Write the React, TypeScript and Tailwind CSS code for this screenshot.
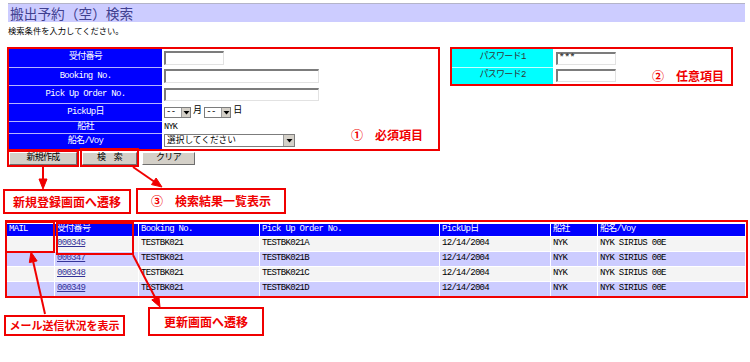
import React from 'react';

const mono = "font-['Liberation_Mono','Noto_Sans_CJK_JP',monospace] text-[9px] tracking-[-0.7px]";
const note = "font-['Noto_Sans_CJK_JP',sans-serif] font-bold text-[12px] text-[#f00000] whitespace-nowrap";

interface Row {
  no: string;
  booking: string;
  order: string;
  date: string;
  carrier: string;
  vessel: string;
}

const rows: Row[] = [
  { no: '000345', booking: 'TESTBK021', order: 'TESTBK021A', date: '12/14/2004', carrier: 'NYK', vessel: 'NYK SIRIUS 00E' },
  { no: '000347', booking: 'TESTBK021', order: 'TESTBK021B', date: '12/14/2004', carrier: 'NYK', vessel: 'NYK SIRIUS 00E' },
  { no: '000348', booking: 'TESTBK021', order: 'TESTBK021C', date: '12/14/2004', carrier: 'NYK', vessel: 'NYK SIRIUS 00E' },
  { no: '000349', booking: 'TESTBK021', order: 'TESTBK021D', date: '12/14/2004', carrier: 'NYK', vessel: 'NYK SIRIUS 00E' },
];

function TextBox({ className, value }: { className: string; value?: string }) {
  return (
    <div
      className={`flex items-center bg-white border border-t-2 border-l-2 border-t-[#7c7c7c] border-l-[#7c7c7c] border-r-[#e2e2e2] border-b-[#e2e2e2] pl-[1px] ${className}`}
    >
      {value && <span className="leading-none text-[9px] font-bold tracking-[0px] text-[#444]">{value}</span>}
    </div>
  );
}

function Arrow() {
  return (
    <svg width="7" height="5" viewBox="0 0 7 5">
      <polygon points="0.5,1 6.5,1 3.5,4.5" fill="#000" />
    </svg>
  );
}

function SmallSelect() {
  return (
    <div className="flex h-[11px] w-[27px] items-stretch border border-[#7c7c7c] bg-white">
      <span className="flex flex-1 items-center pl-[1px] leading-none">--</span>
      <span className="flex w-[9px] items-center justify-center bg-[#d4d0c8] border-l border-[#9a9a9a]">
        <Arrow />
      </span>
    </div>
  );
}

function Button({ label, className }: { label: string; className: string }) {
  return (
    <div
      className={`flex h-[13px] items-center justify-center bg-[#d4d0c8] border border-t-white border-l-white border-r-[#6e6e6e] border-b-[#6e6e6e] leading-none ${className}`}
    >
      {label}
    </div>
  );
}

export default function App() {
  return (
    <div className="relative h-[362px] w-[750px] overflow-hidden bg-white pt-[3px] text-black">
      {/* Title */}
      <div className="ml-[8px] h-[19px] w-[737px] border-t border-[#b4b4c8] bg-[#ccccff] pl-[2px] font-['Noto_Sans_CJK_JP',sans-serif] text-[13.7px] leading-[18px] text-[#404090]">
        搬出予約（空）検索
      </div>
      <div className="ml-[8px] mt-[3px] font-['Noto_Sans_CJK_JP',sans-serif] text-[8.3px] leading-[10px]">
        検索条件を入力してください。
      </div>

      {/* Search form */}
      <div className={`ml-[7px] mt-[12px] flex items-start ${mono}`}>
        <div className="relative h-[104px] w-[433px] border-2 border-[#f00000]">
          <div className="flex h-[18px]">
            <div className="flex w-[153px] items-center justify-center bg-[#0000ff] text-white">受付番号</div>
            <div className="flex items-center pl-[2px]">
              <TextBox className="h-[14px] w-[60px]" />
            </div>
          </div>
          <div className="flex h-[18px]">
            <div className="flex w-[153px] items-center justify-center border-t border-[#b4b4ff] bg-[#0000ff] text-white">Booking No.</div>
            <div className="flex items-center pl-[2px]">
              <TextBox className="h-[14px] w-[155px]" />
            </div>
          </div>
          <div className="flex h-[18px]">
            <div className="flex w-[153px] items-center justify-center border-t border-[#b4b4ff] bg-[#0000ff] text-white">Pick Up Order No.</div>
            <div className="flex items-center pl-[2px]">
              <TextBox className="h-[13px] w-[155px]" />
            </div>
          </div>
          <div className="flex h-[18px]">
            <div className="flex w-[153px] items-center justify-center border-t border-[#b4b4ff] bg-[#0000ff] text-white">PickUp日</div>
            <div className="flex items-center gap-[2px] pl-[2px]">
              <SmallSelect />
              <span className="mr-[1px]">月</span>
              <SmallSelect />
              <span>日</span>
            </div>
          </div>
          <div className="flex h-[12px]">
            <div className="flex w-[153px] items-center justify-center border-t border-[#b4b4ff] bg-[#0000ff] text-white">船社</div>
            <div className="flex items-center pl-[2px] text-[8.5px]">NYK</div>
          </div>
          <div className="flex h-[16px]">
            <div className="flex w-[153px] items-center justify-center border-t border-[#b4b4ff] bg-[#0000ff] text-white">船名/Voy</div>
            <div className="flex items-start pl-[2px] pt-[1px]">
              <div className="flex h-[13px] w-[131px] items-stretch border border-[#7c7c7c] bg-white">
                <span className="flex flex-1 items-center pl-[2px] font-['Noto_Sans_CJK_JP',sans-serif] text-[8.7px] tracking-normal leading-none">
                  選択してください
                </span>
                <span className="flex w-[11px] items-center justify-center bg-[#d4d0c8] border-l border-[#9a9a9a]">
                  <Arrow />
                </span>
              </div>
            </div>
          </div>
          <div className={`absolute left-[342px] top-[80px] leading-none tracking-normal ${note}`}>①　必須項目</div>
        </div>

        <div className="ml-[10px] h-[39px] w-[283px] border-2 border-[#f00000]">
          <div className="flex h-[18px]">
            <div className="flex w-[101px] items-center justify-center bg-[#00ffff] text-[#333]">パスワード1</div>
            <div className="flex items-center pl-[3px]">
              <TextBox className="h-[13px] w-[60px]" value="***" />
            </div>
          </div>
          <div className="flex h-[17px]">
            <div className="flex w-[101px] items-center justify-center border-t border-[#c4ffff] bg-[#00ffff] text-[#333]">パスワード2</div>
            <div className="flex items-center pl-[3px]">
              <TextBox className="h-[13px] w-[60px]" />
              <span className={`ml-[36px] leading-none tracking-normal ${note}`}>②　任意項目</span>
            </div>
          </div>
        </div>
      </div>

      {/* Buttons */}
      <div className={`ml-[9px] mt-[1px] flex gap-[5px] ${mono}`}>
        <Button label="新規作成" className="w-[68px]" />
        <Button label="検　索" className="w-[55px]" />
        <Button label="クリア" className="w-[53px]" />
      </div>

      {/* Notes for buttons */}
      <div className="ml-[3px] mt-[23px] flex items-start gap-[5px]">
        <div className={`mt-[1px] flex h-[25px] w-[128px] items-center justify-center border-2 border-[#f00000] ${note}`}>
          新規登録画面へ遷移
        </div>
        <div className={`flex h-[26px] w-[150px] items-center justify-center border-2 border-[#f00000] ${note}`}>
          ③　検索結果一覧表示
        </div>
      </div>

      {/* Result list */}
      <div className={`ml-[5px] mt-[6px] h-[78px] w-[743px] border-2 border-[#f00000] pt-[2px] ${mono}`}>
        <div className="grid grid-cols-[47px_83px_120px_179px_110px_46px_147px] gap-[1px] bg-white">
          {['MAIL', '受付番号', 'Booking No.', 'Pick Up Order No.', 'PickUp日', '船社', '船名/Voy'].map((h) => (
            <div key={h} className="flex h-[12px] items-center bg-[#0000ff] pl-[2px] text-white">
              {h}
            </div>
          ))}
          {rows.map((r, i) => {
            const bg = i % 2 === 0 ? 'bg-[#f4f4f4]' : 'bg-[#ccccff]';
            return (
              <React.Fragment key={r.no}>
                <div className={`h-[14px] ${bg}`} />
                <div className={`flex h-[14px] items-center pl-[2px] ${bg}`}>
                  <span className="text-[#333399] underline">{r.no}</span>
                </div>
                <div className={`flex h-[14px] items-center pl-[2px] ${bg}`}>{r.booking}</div>
                <div className={`flex h-[14px] items-center pl-[2px] ${bg}`}>{r.order}</div>
                <div className={`flex h-[14px] items-center pl-[2px] ${bg}`}>{r.date}</div>
                <div className={`flex h-[14px] items-center pl-[2px] ${bg}`}>{r.carrier}</div>
                <div className={`flex h-[14px] items-center pl-[2px] ${bg}`}>{r.vessel}</div>
              </React.Fragment>
            );
          })}
        </div>
      </div>

      {/* Notes for list */}
      <div className="ml-[4px] mt-[9px] flex items-end gap-[23px]">
        <div className={`flex h-[21px] w-[121px] items-center justify-center border-2 border-[#f00000] !text-[11px] ${note}`}>
          メール送信状況を表示
        </div>
        <div className={`flex h-[29px] w-[116px] items-center justify-center border-2 border-[#f00000] ${note}`}>
          更新画面へ遷移
        </div>
      </div>

      {/* Annotation outlines over the controls */}
      <div className="pointer-events-none absolute left-[7px] top-[150px] h-[17px] w-[72px] border-2 border-[#f00000]" />
      <div className="pointer-events-none absolute left-[80px] top-[148px] h-[19px] w-[59px] border-2 border-[#f00000]" />
      <div className="pointer-events-none absolute left-[5px] top-[221px] h-[32px] w-[50px] border-2 border-[#f00000]" />
      <div className="pointer-events-none absolute left-[56px] top-[222px] h-[33px] w-[78px] border-2 border-[#f00000]" />

      {/* Arrows */}
      <svg className="pointer-events-none absolute left-0 top-0" width="750" height="362" viewBox="0 0 750 362">
        <g stroke="#f00000" strokeWidth="2" fill="#f00000">
          <line x1="43" y1="167" x2="43" y2="180" />
          <polygon points="43,189 39,179 47,179" strokeWidth="1" />
          <line x1="133" y1="167" x2="154" y2="181.5" />
          <polygon points="162,187 151.5,184.6 156.1,178" strokeWidth="1" />
          <line x1="45" y1="314" x2="33.2" y2="261.7" />
          <polygon points="31,252 37.1,260.9 29.3,262.6" strokeWidth="1" />
          <line x1="133" y1="255" x2="155.4" y2="298" />
          <polygon points="160,307 151.8,299.9 158.9,296.3" strokeWidth="1" />
        </g>
      </svg>
    </div>
  );
}
